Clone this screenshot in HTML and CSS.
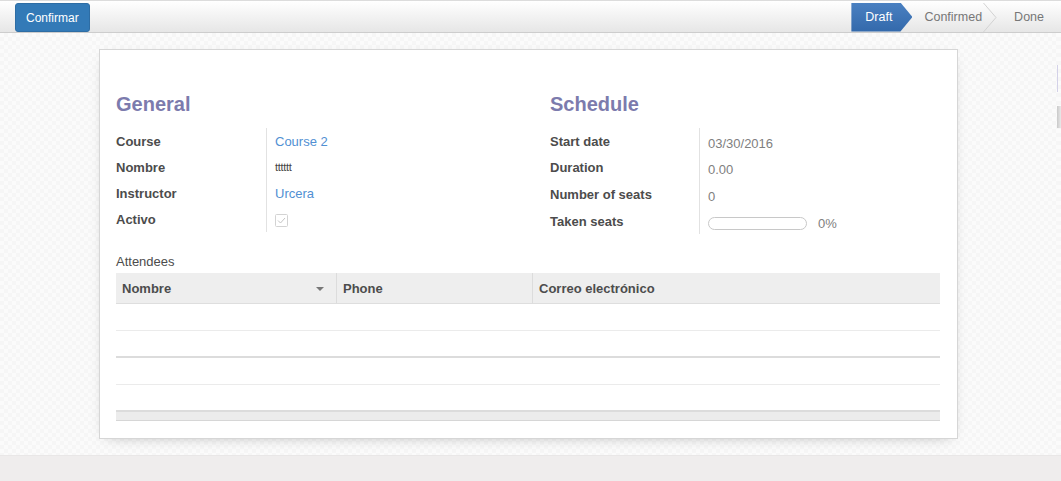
FILE: index.html
```html
<!DOCTYPE html>
<html>
<head>
<meta charset="utf-8">
<link rel="stylesheet" href="styles.css">
</head>
<body>
<div class="app">
  <header class="topbar">
    <button class="btn-confirm">Confirmar</button>
    <div class="statusbar">
      <span class="status active">Draft</span>
      <span class="status mid">Confirmed</span>
      <svg class="chev" width="14" height="29" viewBox="0 0 14 29"><polyline points="0.5,0 13,14.5 0.5,29" fill="none" stroke="#d2d2d2" stroke-width="1"/></svg>
      <span class="status last">Done</span>
    </div>
  </header>
  <div class="body">
    <main class="content">
      <div class="sheet">
        <div class="groups">
          <section class="group">
            <h2 class="group-title">General</h2>
            <div class="fields fields-left">
              <div class="label">Course</div><div class="value"><a class="link">Course 2</a></div>
              <div class="label">Nombre</div><div class="value"><span class="small">tttttt</span></div>
              <div class="label">Instructor</div><div class="value"><a class="link">Urcera</a></div>
              <div class="label">Activo</div><div class="value">
                <svg class="checkbox" width="13" height="13" viewBox="0 0 13 13"><rect x="0.5" y="0.5" width="12" height="12" rx="1" fill="#fff" stroke="#d3d3d3"/><polyline points="3,6.5 5.5,9 10,4" fill="none" stroke="#c4c4c4" stroke-width="1"/></svg>
              </div>
            </div>
          </section>
          <section class="group">
            <h2 class="group-title">Schedule</h2>
            <div class="fields fields-right">
              <div class="label">Start date</div><div class="value muted">03/30/2016</div>
              <div class="label">Duration</div><div class="value muted">0.00</div>
              <div class="label">Number of seats</div><div class="value muted">0</div>
              <div class="label">Taken seats</div><div class="value muted"><span class="progress"></span><span class="pct">0%</span></div>
            </div>
          </section>
        </div>
        <div class="attendees">Attendees</div>
        <table class="list">
          <thead>
            <tr>
              <th class="col-name"><div class="th-inner"><span>Nombre</span><span class="caret"></span></div></th>
              <th class="col-phone">Phone</th>
              <th class="col-mail">Correo electrónico</th>
            </tr>
          </thead>
          <tbody>
            <tr class="r light"><td></td><td></td><td></td></tr>
            <tr class="r dark"><td></td><td></td><td></td></tr>
            <tr class="r light"><td></td><td></td><td></td></tr>
            <tr class="r dark"><td></td><td></td><td></td></tr>
          </tbody>
          <tfoot>
            <tr class="foot"><td></td><td></td><td></td></tr>
          </tfoot>
        </table>
      </div>
    </main>
    <aside class="edge">
      <div class="edge-a"></div>
      <div class="edge-b"></div>
    </aside>
  </div>
  <footer class="bottom"></footer>
</div>
</body>
</html>
```

FILE: styles.css
```css
* { box-sizing: border-box; }
html, body { margin: 0; padding: 0; }
body {
  font-family: "Liberation Sans", Arial, Helvetica, sans-serif;
  font-size: 13px;
  color: #4c4c4c;
  width: 1061px;
  height: 481px;
  overflow: hidden;
}
.app { display: flex; flex-direction: column; height: 481px; }

/* Top bar */
.topbar {
  height: 33px;
  flex: none;
  display: flex;
  align-items: flex-start;
  border-top: 1px solid #dcdcdc;
  border-bottom: 1px solid #cdcdcd;
  background: linear-gradient(#ffffff, #e6e6e6);
  padding-left: 15px;
}
.btn-confirm {
  margin-top: 2px;
  height: 29px;
  padding: 0 10px;
  background: #337ab7;
  border: 1px solid #2e6da4;
  border-radius: 3px;
  color: #fff;
  font-family: "Liberation Sans", Arial, sans-serif;
  font-size: 12px;
}
.statusbar {
  margin-left: auto;
  display: flex;
  align-items: center;
  padding-top: 1px;
  height: 31px;
}
.status {
  height: 29px;
  display: flex;
  align-items: center;
  font-size: 12.5px;
  color: #777;
}
.status.active {
  padding: 0 20px 0 14px;
  color: #fff;
  background: linear-gradient(#4a80c1, #3369ab);
  clip-path: polygon(0 0, calc(100% - 12px) 0, 100% 50%, calc(100% - 12px) 100%, 0 100%);
}
.status.mid { margin-left: 12px; padding-right: 1px; }
.chev { display: block; flex: none; }
.status.last { margin-left: 17px; padding-right: 17px; }

/* Body */
.body { flex: 1; display: flex; min-height: 0; }
.content {
  flex: 1;
  background: repeating-conic-gradient(#f6f6f6 0 25%, #fbfbfb 0 50%) 0 0 / 8px 8px;
  padding-top: 16px;
}
.edge {
  width: 4px;
  flex: none;
  background: repeating-conic-gradient(#f6f6f6 0 25%, #fbfbfb 0 50%) 0 0 / 8px 8px;
  padding-top: 32px;
}
.edge-a { height: 27px; border-left: 1px solid #d3d1e8; }
.edge-b { margin-top: 14px; height: 22px; background: linear-gradient(90deg, #c9c9c9, #e9e9e9); }

.bottom { height: 26px; flex: none; background: #efeded; border-top: 1px solid #e9e7e7; }

/* Sheet */
.sheet {
  width: 859px;
  margin: 0 auto;
  background: #fff;
  border: 1px solid #d6d6d6;
  box-shadow: 0 4px 14px -8px rgba(0,0,0,0.35);
  padding: 42px 17px 17px 16px;
}
.groups { display: grid; grid-template-columns: 434px 1fr; }
.group-title {
  margin: 0 0 12px 0;
  font-size: 20px;
  line-height: 24px;
  font-weight: bold;
  color: #7c7bad;
}
.fields { display: grid; }
.fields-left { grid-template-columns: 150px 1fr; grid-auto-rows: 26px; }
.fields-right { grid-template-columns: 149px 1fr; grid-template-rows: 26px 26px 28px 26px; }
.label {
  font-weight: bold;
  color: #4c4c4c;
  display: flex;
  align-items: center;
}
.value {
  border-left: 1px solid #e2e2e2;
  padding-left: 8px;
  display: flex;
  align-items: center;
}
.fields-right .value { padding-top: 4px; }
.link { color: #5190d3; text-decoration: none; }
.small { font-size: 11px; color: #444; letter-spacing: -0.3px; }
.muted { color: #808080; }
.checkbox { display: block; margin-top: 2px; }
.progress {
  display: inline-block;
  width: 99px;
  height: 13px;
  border: 1px solid #c8c8c8;
  border-radius: 7px;
  background: #fff;
}
.pct { margin-left: 11px; }

.attendees {
  margin-top: 19px;
  margin-bottom: 2px;
  line-height: 18px;
  color: #4c4c4c;
}

/* List */
.list {
  width: 100%;
  border-collapse: separate;
  border-spacing: 0;
  table-layout: fixed;
}
.list th {
  height: 31px;
  background: #eeeeee;
  border-bottom: 1px solid #dedede;
  text-align: left;
  font-weight: bold;
  color: #4c4c4c;
  padding: 0 6px;
}
.col-name { width: 220px; }
.col-phone { width: 196px; border-left: 1px solid #dcdcdc; }
.col-mail { border-left: 1px solid #dcdcdc; }
.th-inner { display: flex; align-items: center; justify-content: space-between; padding-right: 6px; }
.caret {
  width: 0;
  height: 0;
  border-left: 4px solid transparent;
  border-right: 4px solid transparent;
  border-top: 4px solid #777;
  margin-top: 2px;
}
.r td { height: 27px; padding: 0; }
.r.light td { border-bottom: 1px solid #ebebeb; }
.r.dark td { border-bottom: 2px solid #dcdcdc; }
.foot td {
  height: 9px;
  padding: 0;
  background: #ececec;
  border-bottom: 1px solid #d6d6d6;
}
```
